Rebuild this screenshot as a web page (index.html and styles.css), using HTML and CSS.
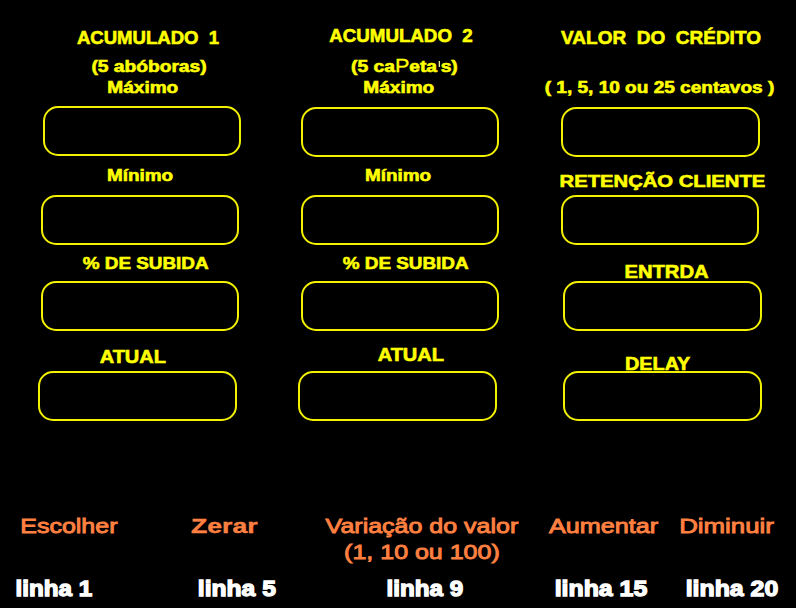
FILE: index.html
```html
<!DOCTYPE html>
<html lang="pt">
<head>
<meta charset="utf-8">
<title>Configuração</title>
<link rel="stylesheet" href="styles.css">
</head>
<body>
<main class="screen">
  <section class="panel">
    <div class="col">
      <div class="head head-1">
        <p class="title in-12"><span class="t s103">ACUMULADO  1</span></p>
        <p class="sub in-15"><span class="t s120">(5 abóboras)</span></p>
        <p class="sub2 in-1"><span class="t s119">Máximo</span></p>
      </div>
      <div class="box bx-r1 bw-198"></div>
      <p class="lbl f16 pt-12 in-n4"><span class="t s118">Mínimo</span></p>
      <div class="box bx-l1 bw-198"></div>
      <p class="lbl f17 pt-9 in-8"><span class="t s111">% DE SUBIDA</span></p>
      <div class="box bx-l1 bw-198"></div>
      <p class="lbl f18 pt-17 in-n18"><span class="t s111">ATUAL</span></p>
      <div class="box bx-l4"></div>
    </div>

    <div class="col">
      <div class="head head-2">
        <p class="title"><span class="t s104">ACUMULADO  2</span></p>
        <p class="sub in-7"><span class="t s120">(5 ca<span class="pp">P</span>eta<span class="tick"></span>s)</span></p>
        <p class="sub2 in-n4"><span class="t s119">Máximo</span></p>
      </div>
      <div class="box bx-t1 bw-198"></div>
      <p class="lbl f16 pt-12 in-n7"><span class="t s118">Mínimo</span></p>
      <div class="box bw-198"></div>
      <p class="lbl f17 pt-9 in-9"><span class="t s111">% DE SUBIDA</span></p>
      <div class="box bw-198"></div>
      <p class="lbl f18 pt-15 in-19"><span class="t s111">ATUAL</span></p>
      <div class="box bx-l3"></div>
    </div>

    <div class="col">
      <div class="head head-3">
        <p class="title big"><span class="t">VALOR  DO  CRÉDITO</span></p>
        <p class="sub far in-n4"><span class="t s119">( 1, 5, 10 ou 25 centavos )</span></p>
      </div>
      <div class="box bx-t1 bx-r1"></div>
      <p class="lbl f17 pt-17 in-3"><span class="t s119">RETENÇÃO CLIENTE</span></p>
      <div class="box bx-r1 bw-198"></div>
      <p class="lbl f18 pt-18 in-10"><span class="t s112">ENTRDA</span></p>
      <div class="box bx-r3"></div>
      <p class="lbl f18 pt-24 in-n6"><span class="t s110">DELAY</span></p>
      <div class="box bx-r3"></div>
    </div>
  </section>

  <section class="bottom">
    <p class="act"><span class="t s119">Escolher</span></p>
    <p class="ln in-n30"><span class="t s110">linha 1</span></p>

    <p class="act strong"><span class="t s127">Zerar</span></p>
    <p class="ln in-24"><span class="t s112">linha 5</span></p>

    <p class="act"><span class="t s119">Variação do valor
(1, 10 ou 100)</span></p>
    <p class="ln in-6"><span class="t s110">linha 9</span></p>

    <p class="act"><span class="t s120">Aumentar</span></p>
    <p class="ln in-n6"><span class="t s113">linha 15</span></p>

    <p class="act"><span class="t s123">Diminuir</span></p>
    <p class="ln in-10"><span class="t s113">linha 20</span></p>
  </section>
</main>
</body>
</html>
```
FILE: styles.css
```css
html, body {
  margin: 0;
  background: #000;
}

body {
  width: 796px;
  height: 608px;
  overflow: hidden;
  font-family: "Liberation Sans", Arial, sans-serif;
}

p {
  margin: 0;
}

/* ---------- upper panel ---------- */
.panel {
  display: grid;
  grid-template-columns: 200px 200px 200px;
  column-gap: 59px;
  padding-left: 42px;
}

.col {
  display: grid;
  grid-template-rows: 106px 50px 39px 50px 36px 50px 40px 50px;
}

.head,
.lbl {
  color: #ffff00;
  font-weight: bold;
  line-height: 1;
  text-align: center;
  -webkit-text-stroke: 0.6px #ffff00;
}

.head-1 { padding-top: 29px; }
.head-2 { padding-top: 27px; }
.head-3 { padding-top: 28px; }

.title { font-size: 18px; }
.title.big { font-size: 19px; }
.sub { font-size: 16px; margin-top: 12px; }
.sub.far { margin-top: 33px; }
.sub2 { font-size: 16px; margin-top: 5px; }

.f16 { font-size: 16px; }
.f17 { font-size: 17px; }
.f18 { font-size: 18px; }

.pt-9 { padding-top: 9.5px; }
.pt-12 { padding-top: 12px; }
.pt-15 { padding-top: 15px; }
.pt-17 { padding-top: 17px; }
.pt-18 { padding-top: 18px; }
.pt-24 { padding-top: 24px; }

/* text scaling / centring helpers */
.t {
  display: inline-block;
  white-space: pre;
  text-indent: 0;
  transform: scaleX(var(--sx, 1));
}
.s103 { --sx: 1.03; }
.s104 { --sx: 1.04; }
.s110 { --sx: 1.1; }
.s111 { --sx: 1.11; }
.s112 { --sx: 1.12; }
.s113 { --sx: 1.13; }
.s118 { --sx: 1.18; }
.s119 { --sx: 1.19; }
.s120 { --sx: 1.2; }
.s123 { --sx: 1.23; }
.s127 { --sx: 1.27; }

.in-1 { text-indent: 1px; }
.in-3 { text-indent: 3px; }
.in-6 { text-indent: 6px; }
.in-7 { text-indent: 7px; }
.in-8 { text-indent: 8px; }
.in-9 { text-indent: 9px; }
.in-10 { text-indent: 10px; }
.in-12 { text-indent: 12px; }
.in-15 { text-indent: 15px; }
.in-19 { text-indent: 19px; }
.in-24 { text-indent: 24px; }
.in-n4 { text-indent: -4px; }
.in-n6 { text-indent: -6px; }
.in-n7 { text-indent: -7px; }
.in-n18 { text-indent: -18px; }
.in-n30 { text-indent: -30px; }

.pp {
  font-weight: normal;
  font-size: 18px;
  -webkit-text-stroke: 0.3px #ffff00;
}

.tick {
  display: inline-block;
  width: 1px;
  height: 6px;
  margin: 0 1px;
  background: #ffffb0;
  vertical-align: 5px;
}

/* boxes */
.box {
  box-sizing: border-box;
  width: 199px;
  height: 50px;
  border: 2px solid #f2f200;
  border-radius: 15px;
}
.bw-198 { width: 198px; }
.bx-t1 { margin-top: 1px; }
.bx-r1 { margin-left: 1px; }
.bx-r3 { margin-left: 3px; }
.bx-l1 { margin-left: -1px; }
.bx-l3 { margin-left: -3px; }
.bx-l4 { margin-left: -4px; }

/* ---------- bottom legend ---------- */
.bottom {
  display: grid;
  grid-template-columns: 137px 175px 220px 144px 102px;
  grid-template-rows: auto auto;
  grid-auto-flow: column;
  row-gap: 13px;
  margin-top: 92px;
}

.act {
  color: #ff8040;
  font-size: 21px;
  line-height: 26px;
  text-align: center;
  -webkit-text-stroke: 0.9px #ff8040;
}
.act.strong {
  font-weight: bold;
  -webkit-text-stroke: 0.4px #ff8040;
}

.ln {
  color: #fff;
  font-size: 22px;
  line-height: 22px;
  font-weight: bold;
  text-align: center;
  white-space: nowrap;
  -webkit-text-stroke: 1.3px #fff;
}
```
